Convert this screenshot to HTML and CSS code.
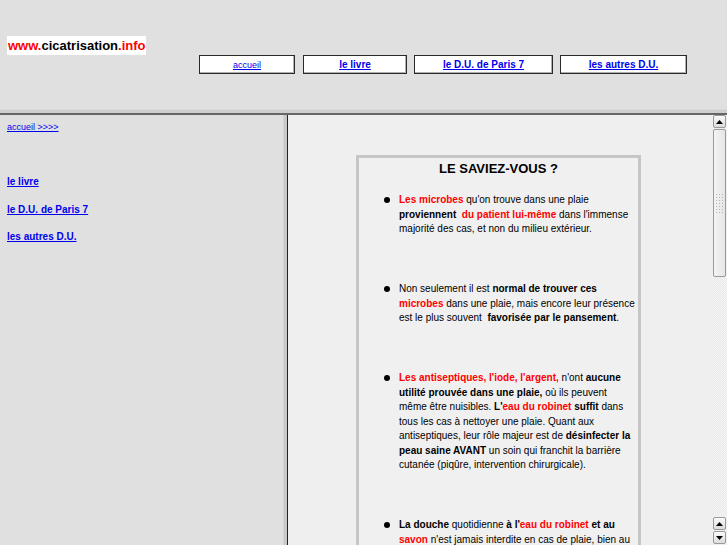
FILE: index.html
```html
<!DOCTYPE html>
<html lang="fr">
<head>
<meta charset="utf-8">
<title>cicatrisation.info</title>
<link rel="stylesheet" href="styles.css">
</head>
<body>
<div class="frames">
  <header class="top">
    <div class="logo"><span class="red">www.</span>cicatrisation<span class="red">.info</span></div>
    <nav class="topnav">
      <div class="tab tab-1"><a href="#" class="small">accueil</a></div>
      <div class="tab tab-2"><a href="#">le livre</a></div>
      <div class="tab tab-3"><a href="#">le D.U. de Paris 7</a></div>
      <div class="tab tab-4"><a href="#">les autres D.U.</a></div>
    </nav>
  </header>
  <div class="hsep"></div>
  <div class="lower">
    <aside class="left">
      <a href="#" class="small home">accueil &gt;&gt;&gt;&gt;</a>
      <a href="#" class="side first">le livre</a>
      <a href="#" class="side">le D.U. de Paris 7</a>
      <a href="#" class="side">les autres D.U.</a>
    </aside>
    <div class="vsep"></div>
    <main class="right">
      <div class="content">
        <div class="box">
          <h1 class="title">LE SAVIEZ-VOUS ?</h1>
          <ul class="facts">
            <li><b class="red">Les microbes</b> qu'on trouve dans une plaie <b>proviennent</b>&nbsp; <b class="red">du patient lui-même</b> dans l'immense majorité des cas, et non du milieu extérieur.</li>
            <li>Non seulement il est <b>normal de trouver ces</b> <b class="red">microbes</b> dans une plaie, mais encore leur présence est le plus souvent&nbsp; <b>favorisée par le pansement</b>.</li>
            <li><b class="red">Les antiseptiques, l'iode, l'argent,</b> n'ont <b>aucune utilité prouvée dans une plaie,</b> où ils peuvent même être nuisibles. <b>L'</b><b class="red">eau du robinet</b> <b>suffit</b> dans tous les cas à nettoyer une plaie. Quant aux antiseptiques, leur rôle majeur est de <b>désinfecter la peau saine AVANT</b> un soin qui franchit la barrière cutanée (piqûre, intervention chirurgicale).</li>
            <li><b>La douche</b> quotidienne <b>à l'</b><b class="red">eau du robinet</b> <b>et au</b> <b class="red">savon</b> n'est jamais interdite en cas de plaie, bien au contraire.</li>
          </ul>
        </div>
      </div>
      <div class="scrollbar">
        <div class="sb-btn"><svg width="7" height="4" viewBox="0 0 7 4"><path d="M0 4 L3.5 0 L7 4 Z" fill="#000"/></svg></div>
        <div class="sb-thumb"><div class="grip"></div></div>
        <div class="sb-track"></div>
        <div class="sb-btn"><svg width="7" height="4" viewBox="0 0 7 4"><path d="M0 4 L3.5 0 L7 4 Z" fill="#000"/></svg></div>
        <div class="sb-btn"><svg width="7" height="4" viewBox="0 0 7 4"><path d="M0 0 L3.5 4 L7 0 Z" fill="#000"/></svg></div>
      </div>
    </main>
  </div>
</div>
</body>
</html>
```
FILE: styles.css
```css
html, body {
  margin: 0;
  padding: 0;
}
body {
  width: 727px;
  height: 545px;
  overflow: hidden;
  font-family: "Liberation Sans", Arial, Helvetica, sans-serif;
  color: #000;
  background: #e0e0e0;
}
a {
  color: #0000ee;
}
.red {
  color: #ff0000;
}
.frames {
  display: flex;
  flex-direction: column;
  height: 545px;
}
.top {
  height: 109px;
  flex: none;
  display: flex;
  align-items: flex-start;
  background: #e0e0e0;
}
.logo {
  margin: 36px 0 0 7px;
  width: 139px;
  height: 19px;
  box-sizing: border-box;
  padding-left: 1px;
  background: #fff;
  font-size: 13px;
  font-weight: bold;
  line-height: 19px;
  white-space: nowrap;
}
.topnav {
  display: flex;
  margin-top: 55px;
}
.tab {
  height: 19px;
  box-sizing: border-box;
  border: 1px solid #2a2a2a;
  box-shadow: inset -1px -1px 0 #b0b0b0;
  background: #fff;
  text-align: center;
  line-height: 17px;
  font-size: 10px;
  font-weight: bold;
}
.tab a.small {
  font-size: 9px;
  font-weight: normal;
}
.tab-1 { width: 96px; margin-left: 53px; }
.tab-2 { width: 104px; margin-left: 8px; }
.tab-3 { width: 139px; margin-left: 7px; }
.tab-4 { width: 127px; margin-left: 7px; }

.hsep {
  flex: none;
  height: 3px;
  background: #cfcfcf;
  border-top: 1px solid #d8d8d8;
  border-bottom: 2px solid #666;
}
.lower {
  flex: 1;
  display: flex;
  min-height: 0;
}
.left {
  width: 276px;
  flex: none;
  padding: 6px 0 0 7px;
  display: flex;
  flex-direction: column;
  align-items: flex-start;
  background: #e0e0e0;
}
.left .home {
  font-size: 9px;
  line-height: 12px;
}
.left .side {
  font-size: 10px;
  font-weight: bold;
  line-height: 12px;
  margin-top: 15.5px;
}
.left .side.first {
  margin-top: 43px;
}
.vsep {
  flex: none;
  width: 4px;
  background: #c8c8c8;
  border-left: 1px solid #d4d4d4;
  border-right: 1px solid #222;
  box-sizing: border-box;
  width: 5px;
}
.right {
  flex: 1;
  display: flex;
  background: #efefef;
  min-width: 0;
}
.content {
  flex: 1;
  overflow: hidden;
}
.box {
  margin: 40px 0 0 68px;
  width: 285px;
  box-sizing: border-box;
  border: 3px solid #c6c6c6;
  background: #f0f0f0;
  min-height: 500px;
}
.title {
  margin: 3px 0 0;
  font-size: 13px;
  line-height: 15px;
  font-weight: bold;
  text-align: center;
}
.facts {
  list-style: none;
  margin: 17px 0 0;
  padding: 0 3px 0 40px;
  font-size: 10px;
  line-height: 14.5px;
}
.facts li {
  position: relative;
  margin-bottom: 45.5px;
}
.facts li::before {
  content: "";
  position: absolute;
  left: -15px;
  top: 4px;
  width: 6px;
  height: 6px;
  border-radius: 50%;
  background: #000;
}
.scrollbar {
  width: 15px;
  flex: none;
  display: flex;
  flex-direction: column;
  align-items: center;
  background: #efefef;
}
.sb-btn {
  width: 13px;
  height: 13px;
  margin-bottom: 1px;
  box-sizing: border-box;
  border: 1px solid #9a9a9a;
  border-radius: 2px;
  background: linear-gradient(#fafafa, #dcdcdc);
  display: flex;
  align-items: center;
  justify-content: center;
  flex: none;
}
.sb-thumb {
  width: 13px;
  height: 148px;
  flex: none;
  box-sizing: border-box;
  border: 1px solid #9a9a9a;
  border-radius: 2px;
  background: linear-gradient(90deg, #f4f4f4, #e6e6e6);
  display: flex;
  align-items: center;
  justify-content: center;
}
.grip {
  width: 9px;
  height: 20px;
  background: radial-gradient(circle, #b4b4b4 0.8px, transparent 1px) 0 0 / 3px 3px;
}
.sb-track {
  flex: 1;
  width: 13px;
  background: repeating-conic-gradient(#e6e6e6 0 25%, #f8f8f8 0 50%) 0 0 / 2px 2px;
  margin-bottom: 2px;
}
```
